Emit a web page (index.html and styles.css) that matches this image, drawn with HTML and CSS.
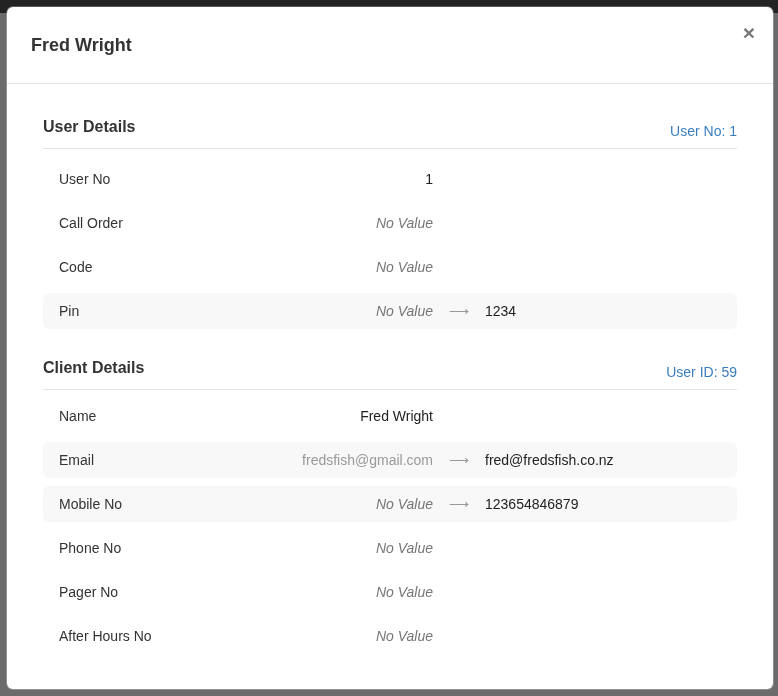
FILE: index.html
```html
<!DOCTYPE html>
<html>
<head>
<meta charset="utf-8">
<link rel="stylesheet" href="styles.css">
</head>
<body>
<div class="page">
  <div class="navbar"></div>
  <div class="page-body"></div>
</div>
<div class="modal">
  <div class="modal-header">
    <h3 class="modal-title">Fred Wright</h3>
    <span class="close">×</span>
  </div>
  <div class="modal-body">
    <section class="section">
      <div class="section-head">
        <h4 class="section-title">User Details</h4>
        <span class="section-meta">User No: 1</span>
      </div>
      <div class="row"><span class="label">User No</span><span class="old">1</span></div>
      <div class="row"><span class="label">Call Order</span><span class="old empty">No Value</span></div>
      <div class="row"><span class="label">Code</span><span class="old empty">No Value</span></div>
      <div class="row changed"><span class="label">Pin</span><span class="old empty">No Value</span><span class="arrow">⟶</span><span class="new">1234</span></div>
    </section>
    <section class="section section-client">
      <div class="section-head">
        <h4 class="section-title">Client Details</h4>
        <span class="section-meta">User ID: 59</span>
      </div>
      <div class="row"><span class="label">Name</span><span class="old">Fred Wright</span></div>
      <div class="row changed"><span class="label">Email</span><span class="old prev">fredsfish@gmail.com</span><span class="arrow">⟶</span><span class="new">fred@fredsfish.co.nz</span></div>
      <div class="row changed"><span class="label">Mobile No</span><span class="old empty">No Value</span><span class="arrow">⟶</span><span class="new">123654846879</span></div>
      <div class="row"><span class="label">Phone No</span><span class="old empty">No Value</span></div>
      <div class="row"><span class="label">Pager No</span><span class="old empty">No Value</span></div>
      <div class="row"><span class="label">After Hours No</span><span class="old empty">No Value</span></div>
    </section>
  </div>
</div>
</body>
</html>
```
FILE: styles.css
```css
html, body {
  margin: 0;
  padding: 0;
  height: 100%;
  overflow: hidden;
}
body {
  background: #6b6b6b;
  font-family: "Liberation Sans", Arial, sans-serif;
  font-size: 14px;
  color: #333;
}
.page {
  height: 100%;
  display: flex;
  flex-direction: column;
}
.navbar {
  height: 13px;
  background: #232323;
  flex: none;
}
.page-body {
  flex: 1;
  background: #6b6b6b;
}
.modal {
  position: fixed;
  top: 7px;
  left: 7px;
  width: 766px;
  height: 682px;
  background: #fff;
  border-radius: 6px;
  box-shadow: 0 0 0 1px rgba(255,255,255,0.25);
  overflow: hidden;
}
.modal-header {
  position: relative;
  padding: 27px 24px 27px 24px;
  border-bottom: 1px solid #e5e5e5;
}
.modal-title {
  margin: 0;
  font-size: 18px;
  line-height: 22px;
  font-weight: bold;
  color: #333;
}
.close {
  position: absolute;
  top: 13px;
  right: 18px;
  font-size: 21px;
  font-weight: bold;
  line-height: 26px;
  color: #777;
}
.modal-body {
  padding: 32px 36px 20px 36px;
}
.section + .section {
  margin-top: 28px;
}
.section-head {
  display: flex;
  justify-content: space-between;
  align-items: flex-end;
  padding-bottom: 10px;
  border-bottom: 1px solid #e5e5e5;
  margin-bottom: 12px;
}
.section-client .section-head {
  margin-bottom: 8px;
}
.section-title {
  margin: 0;
  font-size: 16px;
  line-height: 22px;
  font-weight: bold;
  color: #333;
}
.section-meta {
  color: #3a7dbd;
  font-size: 14px;
  line-height: 14px;
}
.row {
  display: grid;
  grid-template-columns: 160px 214px 52px 1fr;
  align-items: center;
  height: 36px;
  padding: 0 16px;
  margin-bottom: 8px;
  border-radius: 6px;
}
.row.changed {
  background: #f8f8f8;
}
.label {
  color: #333;
}
.old {
  text-align: right;
  color: #222;
}
.old.empty {
  font-style: italic;
  color: #777;
}
.old.prev {
  color: #999;
}
.arrow {
  text-align: center;
  color: #999;
  font-size: 14px;
}
.new {
  color: #222;
}
```
